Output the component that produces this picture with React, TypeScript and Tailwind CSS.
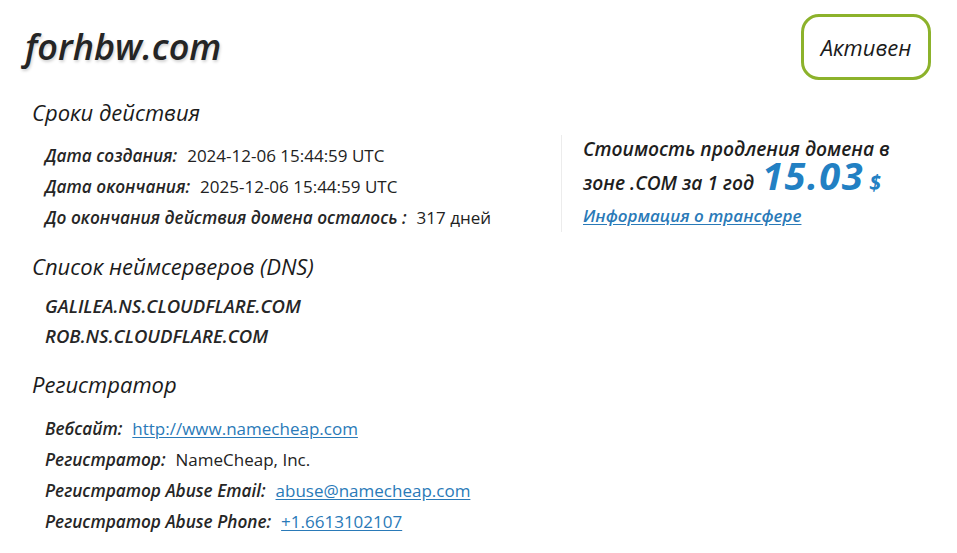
const font = { fontFamily: '"Open Sans", "Noto Sans", sans-serif' }

function Row({ label, children }: { label: string; children: React.ReactNode }) {
  return (
    <div className="flex items-center h-[31px] pl-[20px] whitespace-nowrap">
      <span className="italic font-semibold text-[17.2px] text-[#262626]">{label}</span>
      <span className="ml-[10px] text-[17px] text-[#222]">{children}</span>
    </div>
  )
}

function Link({ children }: { children: React.ReactNode }) {
  return <a className="text-[#2a7ab8] underline underline-offset-2">{children}</a>
}

function Heading({ children }: { children: React.ReactNode }) {
  return (
    <h2 className="h-[30px] flex items-center pl-[7px] italic text-[22px] text-[#1b1b1b]">{children}</h2>
  )
}

export default function App() {
  return (
    <div className="w-[957px] h-[553px] bg-white px-[25px] overflow-hidden" style={font}>
      {/* header */}
      <div className="flex justify-between items-start h-[97px] pt-[14px]">
        <h1 className="mt-[11px] italic font-semibold text-[36px] leading-[44px] text-[#252525] [text-shadow:1px_2px_3px_rgba(0,0,0,0.18)]">
          forhbw.com
        </h1>
        <div className="w-[130px] h-[66px] mr-[1px] border-[3px] border-[#8cb22b] rounded-[18px] flex items-center justify-center italic text-[22px] text-[#1b1b1b]">
          Активен
        </div>
      </div>

      {/* validity + price */}
      <div className="flex">
        <div className="w-[536px]">
          <Heading>Сроки действия</Heading>
          <div className="mt-[13px]">
            <Row label="Дата создания:">2024-12-06 15:44:59 UTC</Row>
            <Row label="Дата окончания:">2025-12-06 15:44:59 UTC</Row>
            <Row label="До окончания действия домена осталось :">317 дней</Row>
          </div>
        </div>
        <div className="mt-[38px] h-[97px] border-l border-[#ececec] pl-[21px] italic font-semibold text-[19.2px] text-[#1e1e1e] whitespace-nowrap">
          <div className="h-[28px] leading-[28px]">Стоимость продления домена в</div>
          <div className="mt-[4px] h-[31px] leading-[31px]">
            зоне .COM за 1 год
            <span className="ml-[8px] text-[38px] font-bold leading-[0px] tracking-[1.5px] text-[#2280c3]">15.03</span>
            <span className="ml-[5px] text-[21px] font-bold leading-[0px] text-[#2280c3]">$</span>
          </div>
          <div className="mt-[6px] text-[17px] leading-[24px]">
            <Link>Информация о трансфере</Link>
          </div>
        </div>
      </div>

      {/* DNS */}
      <div className="mt-[18px]">
        <Heading>Список неймсерверов (DNS)</Heading>
        <div className="mt-[10px] pl-[20px] italic font-semibold text-[18.5px] text-[#262626]">
          <div className="h-[30px] flex items-center">GALILEA.NS.CLOUDFLARE.COM</div>
          <div className="h-[30px] flex items-center">ROB.NS.CLOUDFLARE.COM</div>
        </div>
      </div>

      {/* Registrar */}
      <div className="mt-[18px]">
        <Heading>Регистратор</Heading>
        <div className="mt-[14px]">
          <Row label="Вебсайт:"><Link>http://www.namecheap.com</Link></Row>
          <Row label="Регистратор:">NameCheap, Inc.</Row>
          <Row label="Регистратор Abuse Email:"><Link>abuse@namecheap.com</Link></Row>
          <Row label="Регистратор Abuse Phone:"><Link>+1.6613102107</Link></Row>
        </div>
      </div>
    </div>
  )
}
